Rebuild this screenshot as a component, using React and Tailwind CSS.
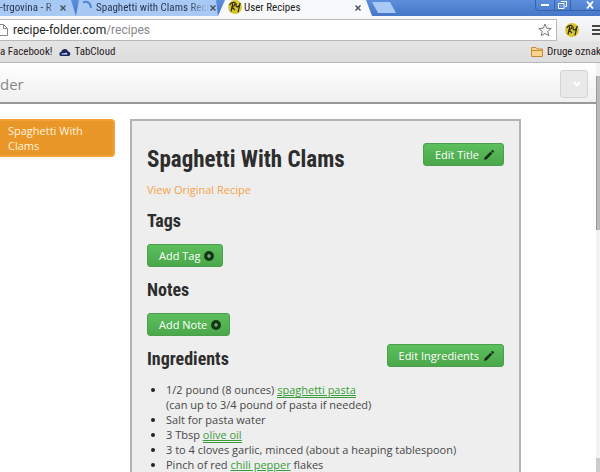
import React from "react";

const UI_FONT = "font-['Open_Sans','Noto_Sans',sans-serif]";
const CHROME_FONT = "font-['Roboto_Condensed','Roboto',sans-serif]";
const HEADING_FONT = "font-['Roboto_Condensed','Roboto',sans-serif]";

const ingredients = [
  { before: "1/2 pound (8 ounces) ", link: "spaghetti pasta", note: "(can up to 3/4 pound of pasta if needed)" },
  { before: "Salt for pasta water" },
  { before: "3 Tbsp ", link: "olive oil" },
  { before: "3 to 4 cloves garlic, minced (about a heaping tablespoon)" },
  { before: "Pinch of red ", link: "chili pepper", after: " flakes" },
];

function PencilIcon() {
  return (
    <svg className="w-3 h-3" viewBox="0 0 12 12" fill="#123012">
      <path d="M1 11l.8-2.700 5.600-5.600 1.900 1.900-5.600 5.600z" />
      <path d="M8 2.100l1-.9c.4-.4.800-.4 1.100 0l.7.7c.3.300.3.700 0 1.100l-.9 1z" />
    </svg>
  );
}

function PlusIcon() {
  return (
    <svg className="w-[10px] h-[10px]" viewBox="0 0 10 10">
      <circle cx="5" cy="5" r="4.900" fill="#123512" />
      <path d="M5 3v4M3 5h4" stroke="#8fc98f" strokeWidth="1.100" />
    </svg>
  );
}

function RecipeLogo({ className }) {
  return (
    <svg className={className} viewBox="0 0 14 14" fill="none">
      <circle cx="7" cy="7" r="6.900" fill="#d9c52a" />
      <path d="M1.500 5c2-3 6-3.300 5.700-1.500S4.800 6.800 3.500 7.200M4.800 3.500L3 11.500M4.500 7.200l2.300 3" stroke="#2d2a14" strokeWidth="1.200" />
      <path d="M8.300 3.500C7.800 6 8 7.300 9.800 6.800S12 4.500 12.200 3M12 3.500L10 12.300" stroke="#2d2a14" strokeWidth="1.200" />
    </svg>
  );
}

function CloseButton() {
  return (
    <button aria-label="Close tab" className="flex h-[15px] shrink-0 items-center">
      <svg className="w-2 h-2" viewBox="0 0 8 8" stroke="#4b5563" strokeWidth="1.500">
        <path d="M1.500 1.500l5 5M6.500 1.500l-5 5" />
      </svg>
    </button>
  );
}

function GreenButton({ icon, children }) {
  return (
    <button className="flex h-[23px] items-center gap-1 rounded-[3px] border border-[#4a9f4a] bg-linear-to-b from-[#5cbf5c] to-[#4ba74b] pl-[11px] pr-2 text-[11px] leading-4 text-white">
      {children}
      {icon}
    </button>
  );
}

function TabStrip() {
  return (
    <div className={`${CHROME_FONT} flex h-4 shrink-0 bg-linear-to-b from-[#5c8edb] to-[#4677c8] text-[11px] leading-[15px] text-[#26324a]`}>
      <div className="flex w-[76px] shrink-0 items-start bg-[#a9c9f5] pr-[9px] [clip-path:polygon(0_0,71px_0,100%_100%,0_100%)]">
        <span className="flex-1 whitespace-nowrap bg-linear-to-r from-[#26324a] from-75% to-[#a9c9f5] bg-clip-text text-transparent">
          -trgovina - R
        </span>
        <CloseButton />
      </div>
      <div className="flex w-[142px] shrink-0 items-start bg-[#a9c9f5] pl-[6px] pr-1 [clip-path:polygon(3px_0,calc(100%_-_2px)_0,100%_100%,0_100%)]">
        <svg className="mr-[2px] h-3 w-3 shrink-0" viewBox="0 0 12 12" fill="none">
          <path d="M1 2.500c4-2 8 .5 7.800 5.500" stroke="#4d87dc" strokeWidth="2" />
        </svg>
        <span className="flex-1 whitespace-nowrap bg-linear-to-r from-[#26324a] from-80% to-[#a9c9f5] bg-clip-text text-transparent">
          Spaghetti with Clams Reci
        </span>
        <CloseButton />
      </div>
      <div className="flex w-[154px] shrink-0 items-start bg-[#f8f9fb] pl-[10px] pr-[10px] text-[#222] [clip-path:polygon(7px_0,calc(100%_-_6px)_0,100%_100%,0_100%)]">
        <RecipeLogo className="mr-[2px] h-[14px] w-[14px] shrink-0" />
        <span className="flex-1 whitespace-nowrap">User Recipes</span>
        <CloseButton />
      </div>
      <button aria-label="New tab" className="mt-[2px] h-[11px] w-6 shrink-0 bg-[#a9c9f5] [clip-path:polygon(0_0,18px_0,100%_100%,6px_100%)]" />
      <div className="flex flex-1 items-start justify-end text-white">
        <button aria-label="Minimize" className="flex h-[11px] w-5 items-center justify-center rounded-bl-sm border border-t-0 border-[#3763ad]">
          <span className="h-[2px] w-2 bg-white" />
        </button>
        <button aria-label="Restore" className="flex h-[11px] w-4 items-center justify-center border border-t-0 border-l-0 border-[#3763ad]">
          <svg className="h-2 w-[9px]" viewBox="0 0 9 8" fill="none" stroke="white">
            <path d="M3 .5h5.500v5H7M.5 2.500h5.500v5H.5zM3 4.500v1" />
          </svg>
        </button>
        <button aria-label="Close" className="flex h-[11px] w-[29px] items-center justify-center border border-t-0 border-r-0 border-l-0 border-[#3763ad] pl-2">
          <svg className="h-2 w-2" viewBox="0 0 8 8" stroke="white" strokeWidth="1.800">
            <path d="M1 .5l6 7M7 .5l-6 7" />
          </svg>
        </button>
      </div>
    </div>
  );
}

function AddressBar() {
  return (
    <div className="flex h-[25px] shrink-0 items-end bg-linear-to-b from-[#f8f9fb] to-[#eaeaea]">
      <div className="flex h-[22px] flex-1 items-center border border-l-0 border-[#b9b9b9] bg-white pr-1">
        <svg className="mr-[5px] h-3 w-2 shrink-0" viewBox="0 0 8 12" fill="none" stroke="#888">
          <path d="M0 .5h3.500l4 4v7H0M3.500.5v4h4" />
        </svg>
        <a href="#recipes" className="flex-1 font-['Roboto',sans-serif] text-[12px] leading-4 text-[#222]">
          recipe-folder.com<span className="text-[#888]">/recipes</span>
        </a>
        <svg className="h-[14px] w-[14px]" viewBox="0 0 14 14" fill="white" stroke="#777">
          <path d="M7 1l1.700 4.200 4.500.3-3.500 2.900 1.100 4.400L7 10.400l-3.800 2.400 1.100-4.400L.8 5.500l4.500-.3z" />
        </svg>
      </div>
      <div className="flex h-[22px] items-center">
        <RecipeLogo className="mx-2 h-[14px] w-[14px]" />
        <button aria-label="Menu" className="ml-[5px] flex w-2 flex-col gap-[2px]">
          <span className="h-[2px] bg-[#444]" />
          <span className="h-[2px] bg-[#444]" />
          <span className="h-[2px] bg-[#444]" />
        </button>
      </div>
    </div>
  );
}

function BookmarksBar() {
  return (
    <div className={`${CHROME_FONT} flex h-[22px] shrink-0 items-center whitespace-nowrap border-b border-[#b8b8b8] bg-linear-to-b from-[#e4e4e4] to-[#dedede] text-[11px] leading-4 text-[#2a2020]`}>
      <a href="#facebook">a Facebook!</a>
      <a href="#tabcloud" className="ml-[6px] flex items-center gap-1">
        <svg className="h-3 w-3" viewBox="0 0 12 12">
          <path d="M2.500 10a2 2 0 0 1-.3-4C3 2.500 8 2 9 5.500c3 .3 3 4.500.5 4.500z" fill="#18255e" />
          <path d="M2.500 8.500c0-1.200 1.500-1.800 2.500-.8.800-1.500 3.500-1 3.500.8z" fill="#dfe5f2" />
        </svg>
        TabCloud
      </a>
      <a href="#other" className="ml-auto flex w-[69px] items-center gap-1">
        <svg className="h-3 w-3 shrink-0" viewBox="0 0 12 12" fill="#f9d58c" stroke="#c88b35">
          <path d="M.5 10.500v-9h4.500l1 1.500h5.500v7.500zM.5 4.500h11" />
        </svg>
        Druge oznake
      </a>
    </div>
  );
}

function Recipe() {
  return (
    <main className="flex-1 border-2 border-[#b3b3b3] bg-[#eeeeee] px-[15px] pt-[22px] pb-8">
      <div className="flex items-start justify-between">
        <h1 className={`${HEADING_FONT} mt-[3px] text-[23px] font-bold leading-[28px] text-[#2d2d2d]`}>
          Spaghetti With Clams
        </h1>
        <GreenButton icon={<PencilIcon />}>Edit Title</GreenButton>
      </div>
      <a href="#original" className="mt-2 block w-fit text-[11px] leading-4 text-[#f3a34a]">
        View Original Recipe
      </a>
      <h2 className={`${HEADING_FONT} mt-3 mb-3 text-[18px] font-bold leading-[22px] text-[#2d2d2d]`}>Tags</h2>
      <GreenButton icon={<PlusIcon />}>Add Tag</GreenButton>
      <h2 className={`${HEADING_FONT} mt-3 mb-3 text-[18px] font-bold leading-[22px] text-[#2d2d2d]`}>Notes</h2>
      <GreenButton icon={<PlusIcon />}>Add Note</GreenButton>
      <div className="mt-2 flex items-start justify-between">
        <h2 className={`${HEADING_FONT} mt-1 text-[18px] font-bold leading-[22px] text-[#2d2d2d]`}>Ingredients</h2>
        <GreenButton icon={<PencilIcon />}>Edit Ingredients</GreenButton>
      </div>
      <ul className="mt-3 list-disc pl-[19px] text-[11px] leading-[15px] text-[#484848] marker:text-[#222]">
        {ingredients.map((item) => (
          <li key={item.before}>
            {item.before}
            {item.link && (
              <a href="#ingredient" className="border-b border-[#3a9d3a] text-[#3a9d3a] underline">
                {item.link}
              </a>
            )}
            {item.after}
            {item.note && <div>{item.note}</div>}
          </li>
        ))}
      </ul>
    </main>
  );
}

function App() {
  return (
    <div className={`${UI_FONT} flex h-screen flex-col overflow-hidden bg-white`}>
      <TabStrip />
      <AddressBar />
      <BookmarksBar />
      <div className="flex min-h-0 flex-1">
        <div className="flex min-w-0 flex-1 flex-col overflow-hidden">
          <header className="flex h-[41px] shrink-0 items-center justify-between border-b-2 border-[#999] bg-linear-to-b from-white to-[#f0f0f0] pt-[2px] pr-2">
            <span className="text-[15px] leading-5 text-[#888]">der</span>
            <button aria-label="Menu" className="flex h-7 w-7 items-center justify-center rounded-[3px] border border-[#d4d4d4] bg-[#e9e9e9] pl-[6px]">
              <svg className="h-2 w-2" viewBox="0 0 8 8" fill="none" stroke="white" strokeWidth="2">
                <path d="M1 2l3 3.500L7 2" />
              </svg>
            </button>
          </header>
          <div className="flex shrink-0 items-start pt-[15px] pr-[75px]">
            <aside className="mr-[15px] w-[115px] shrink-0">
              <a href="#spaghetti" className="block rounded-r-[4px] border-2 border-l-0 border-[#f0a236] bg-[#e99728] py-[2px] pl-2 pr-4 text-[11px] leading-[15px] text-[#fff3dc]">
                Spaghetti With Clams
              </a>
            </aside>
            <Recipe />
          </div>
        </div>
        <div className="flex w-1 shrink-0 flex-col bg-[#f2f2f2]">
          <div className="mt-[13px] h-[154px] border-l border-[#999] bg-[#bbb]" />
          <div className="mt-auto h-[14px] bg-[#ccc]" />
        </div>
      </div>
    </div>
  );
}

export default App;
